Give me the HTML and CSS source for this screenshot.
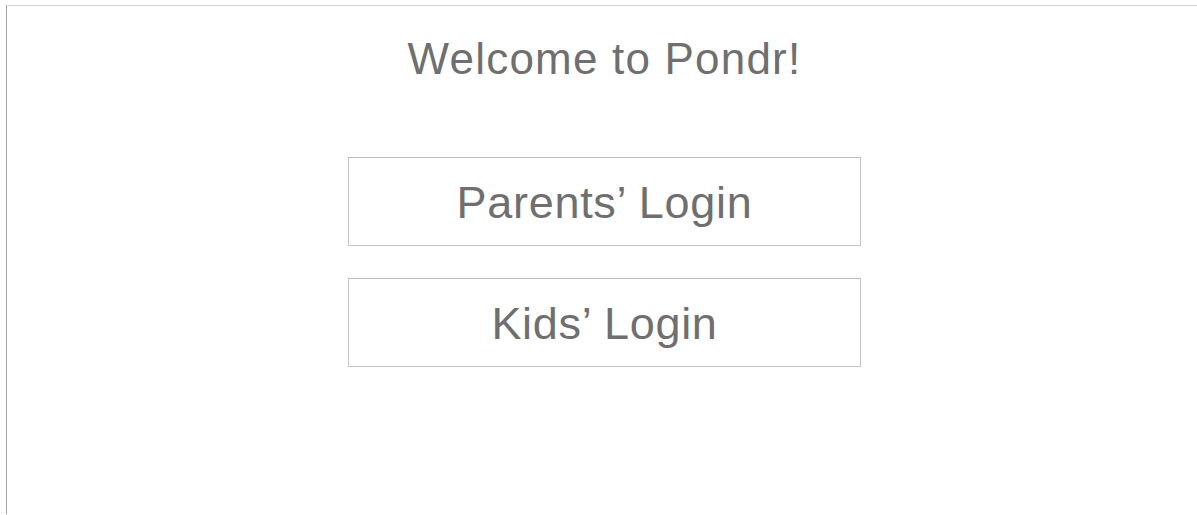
FILE: index.html
```html
<!DOCTYPE html>
<html lang="en">
<head>
<meta charset="utf-8">
<title>Pondr</title>
<link rel="stylesheet" href="styles.css">
</head>
<body>
  <main class="frame">
    <h1 class="welcome">Welcome to Pondr!</h1>
    <div class="logins">
      <button class="login-btn" type="button">Parents’ Login</button>
      <button class="login-btn" type="button">Kids’ Login</button>
    </div>
  </main>
</body>
</html>
```

FILE: styles.css
```css
html, body {
  margin: 0;
  padding: 0;
  overflow: hidden;
  background: #ffffff;
}

body {
  height: 515px;
  font-family: "Liberation Sans", Arial, Helvetica, sans-serif;
  color: #6f6f6f;
}

.frame {
  margin: 5px 0 0 6px;
  width: 1195px;
  height: 480px;
  border-top: 1px solid #d2d2d2;
  border-left: 1px solid #a3a3a3;
  padding-top: 28px;
  box-sizing: content-box;
  display: flex;
  flex-direction: column;
  align-items: center;
}

.welcome {
  margin: 0;
  font-size: 44px;
  line-height: 50px;
  font-weight: normal;
  letter-spacing: 1.2px;
  color: #6f6f6f;
}

.logins {
  margin-top: 73px;
  display: flex;
  flex-direction: column;
  gap: 32px;
}

.login-btn {
  width: 513px;
  height: 89px;
  box-sizing: border-box;
  border: 1px solid #c4c4c4;
  border-top-color: #bcbcbc;
  background: #ffffff;
  display: flex;
  align-items: center;
  justify-content: center;
  padding: 3px 0 0 0;
  font-family: "Liberation Sans", Arial, Helvetica, sans-serif;
  font-size: 45px;
  letter-spacing: 0.7px;
  color: #6f6f6f;
}
```
